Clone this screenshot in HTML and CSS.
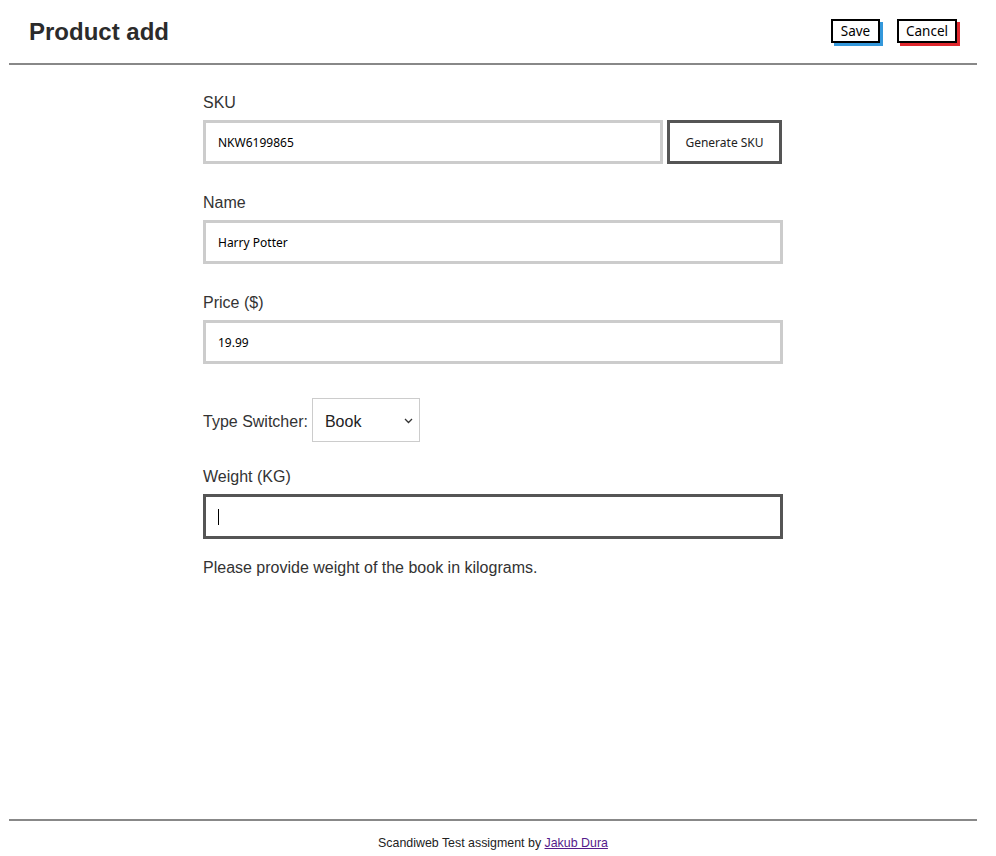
FILE: index.html
```html
<!DOCTYPE html>
<html lang="en">
<head>
<meta charset="utf-8">
<title>Product add</title>
<link rel="stylesheet" href="styles.css">
</head>
<body>
<header class="top">
  <h1 class="title">Product add</h1>
  <div class="actions">
    <button class="btn btn-save" type="button">Save</button>
    <button class="btn btn-cancel" type="button">Cancel</button>
  </div>
</header>
<main class="main">
  <form class="form" id="product_form">
    <div class="group">
      <label class="label" for="sku">SKU</label>
      <div class="row">
        <input class="field" id="sku" type="text" value="NKW6199865">
        <button class="gen" type="button">Generate SKU</button>
      </div>
    </div>
    <div class="group">
      <label class="label" for="name">Name</label>
      <input class="field" id="name" type="text" value="Harry Potter">
    </div>
    <div class="group">
      <label class="label" for="price">Price ($)</label>
      <input class="field" id="price" type="text" value="19.99">
    </div>
    <div class="switcher">
      <label class="label-inline" for="productType">Type Switcher:</label>
      <div class="select">
        <span class="select-value">Book</span>
        <svg class="chev" width="9" height="6" viewBox="0 0 9 6"><path d="M1 1 L4.5 4.5 L8 1" fill="none" stroke="#333" stroke-width="1.3"/></svg>
      </div>
    </div>
    <div class="group group-weight">
      <label class="label" for="weight">Weight (KG)</label>
      <div class="focus-wrap">
        <input class="field field-focus" id="weight" type="text" value="">
        <span class="caret"></span>
      </div>
    </div>
    <p class="help">Please provide weight of the book in kilograms.</p>
  </form>
</main>
<footer class="foot">
  <p class="foot-text">Scandiweb Test assigment by <a class="foot-link" href="#">Jakub Dura</a></p>
</footer>
</body>
</html>
```
FILE: styles.css
```css
* { box-sizing: border-box; }
html, body { margin: 0; padding: 0; background: #fff; }
body {
  width: 996px;
  height: 856px;
  font-family: "Liberation Sans", Arial, sans-serif;
  color: #333;
  display: flex;
  flex-direction: column;
  padding: 0 19px 0 9px;
}
.top {
  display: flex;
  align-items: center;
  justify-content: space-between;
  height: 65px;
  border-bottom: 2px solid #888;
  padding: 0 20px 2px 20px;
}
.title {
  margin: 0;
  padding-top: 2px;
  font-size: 24px;
  font-weight: bold;
  color: #2b2b2b;
  line-height: 28px;
}
.actions { display: flex; gap: 17px; }
.btn {
  font-family: "Noto Sans", "Open Sans", sans-serif;
  font-size: 13.5px;
  height: 24px;
  padding: 0;
  background: #fff;
  color: #000;
  border: 2px solid #000;
  line-height: 18px;
  cursor: pointer;
}
.btn-save { width: 49px; box-shadow: 3px 3px 0 #3498db; }
.btn-cancel { width: 60px; box-shadow: 3px 3px 0 #e0282e; }
.main { flex: 1; padding-top: 28px; }
.form { width: 580px; margin-left: 194px; }
.group { margin-bottom: 29px; }
.label {
  display: block;
  font-size: 16px;
  line-height: 19px;
  margin-bottom: 8px;
}
.row { display: flex; gap: 4px; }
.field {
  display: block;
  width: 100%;
  height: 44px;
  border: 3px solid #ccc;
  padding: 0 12px;
  font-family: "Noto Sans", "Open Sans", sans-serif;
  font-size: 12px;
  color: #000;
  background: #fff;
  outline: none;
}
.row .field { width: 460px; flex: none; }
.gen {
  width: 115px;
  height: 44px;
  border: 3px solid #555;
  background: #fff;
  font-family: "Noto Sans", "Open Sans", sans-serif;
  font-size: 12px;
  color: #222;
  padding: 0;
}
.switcher {
  display: flex;
  align-items: center;
  gap: 4px;
  margin-top: 34px;
  margin-bottom: 25px;
}
.label-inline { font-size: 16px; line-height: 18px; padding-top: 3px; }
.select {
  width: 108px;
  height: 44px;
  border: 1px solid #ccc;
  display: flex;
  align-items: center;
  justify-content: space-between;
  padding: 0 6px 0 12px;
  font-size: 16px;
  color: #222;
}
.select-value { padding-top: 3px; }
.chev { margin-top: 1px; }
.group-weight { margin-bottom: 19px; }
.focus-wrap { position: relative; }
.field-focus { border-color: #555; height: 45px; }
.caret {
  position: absolute;
  left: 15px;
  top: 15px;
  width: 1px;
  height: 16px;
  background: #000;
}
.help { margin: 0; font-size: 16px; line-height: 19px; }
.foot {
  height: 37px;
  border-top: 2px solid #888;
  display: flex;
  justify-content: center;
  padding-top: 15px;
}
.foot-text { margin: 0; font-size: 12.4px; line-height: 14px; color: #222; }
.foot-link { color: #551a8b; text-decoration: underline; }
```
